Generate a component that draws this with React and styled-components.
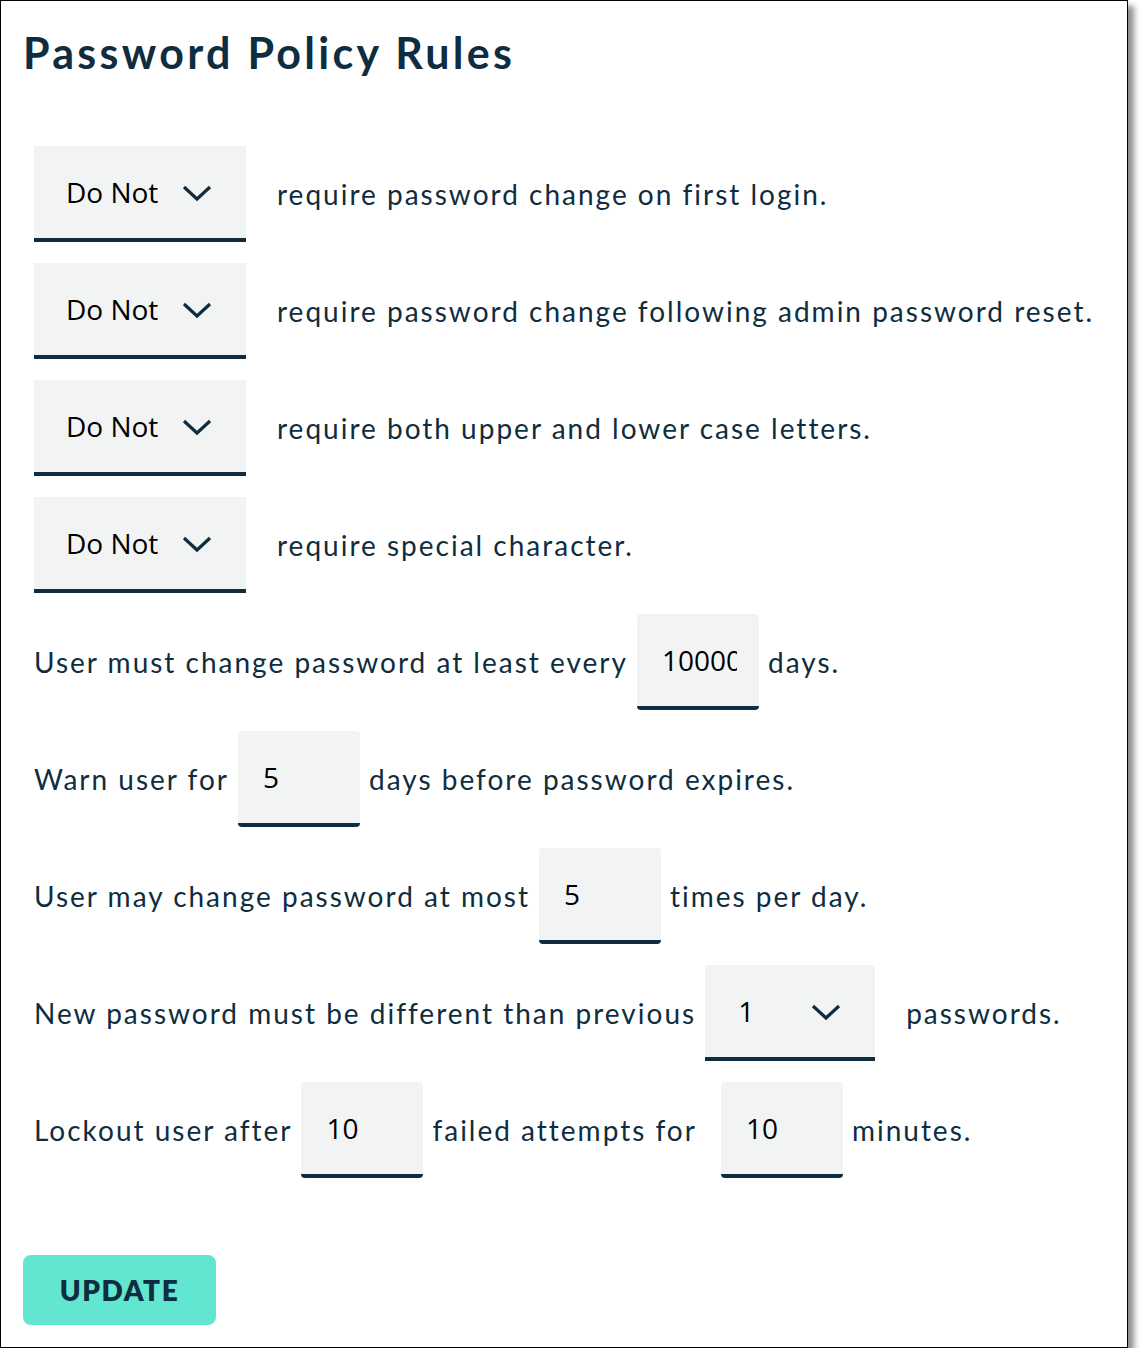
import React from 'react';
import styled, { createGlobalStyle } from 'styled-components';

const GlobalStyle = createGlobalStyle`
  body {
    margin: 0;
    background: #fff;
    font-family: 'Lato', 'Open Sans', sans-serif;
  }
`;

const Frame = styled.div`
  width: 1126px;
  height: 1346px;
  border: 1px solid #000;
  background: #fff;
  box-shadow: 6px 6px 6px rgba(0, 0, 0, 0.45);
  box-sizing: content-box;
`;

const Inner = styled.div`
  padding: 26px 22px 0 22px;
`;

const Title = styled.h1`
  margin: 0;
  font-family: 'Lato', sans-serif;
  font-weight: 700;
  font-size: 43px;
  color: #0f2d40;
  letter-spacing: 3.3px;
`;

const Form = styled.div`
  display: flex;
  flex-direction: column;
  gap: 21px;
  margin: 68px 0 0 11px;
`;

const Row = styled.div`
  display: flex;
  align-items: center;
  height: 96px;
  gap: ${(p) => p.gap || 9}px;
`;

const Text = styled.span`
  font-size: 28px;
  letter-spacing: 2px;
  color: #0f2d40;
  white-space: nowrap;
  margin-left: ${(p) => p.ml || 0}px;
`;

const SelectWrap = styled.div`
  position: relative;
  width: ${(p) => p.width}px;
  height: 96px;
  flex-shrink: 0;
`;

const Select = styled.select`
  appearance: none;
  width: 100%;
  height: 100%;
  border: none;
  border-bottom: 4px solid #0f2d40;
  background: #f2f3f3;
  padding: 0 0 0 ${(p) => p.pl || 32}px;
  font-family: 'Open Sans', sans-serif;
  font-size: 28px;
  color: #000;
  outline: none;
  box-sizing: border-box;
`;

const Chevron = styled.svg`
  position: absolute;
  right: 34px;
  top: 39px;
  width: 30px;
  height: 17px;
  pointer-events: none;
`;

const Input = styled.input`
  width: 122px;
  height: 96px;
  flex-shrink: 0;
  border: none;
  border-bottom: 4px solid #0f2d40;
  border-radius: 4px;
  background: #f2f3f3;
  padding: 0 22px 0 25px;
  margin-left: ${(p) => p.ml || 0}px;
  font-family: 'Open Sans', sans-serif;
  font-size: 28px;
  color: #000;
  outline: none;
  box-sizing: border-box;
`;

const Button = styled.button`
  margin-top: 77px;
  width: 193px;
  height: 70px;
  border: none;
  border-radius: 8px;
  background: #63e6cf;
  color: #0f2d40;
  font-family: 'Lato', sans-serif;
  font-weight: 800;
  font-size: 28px;
  letter-spacing: 1.5px;
  cursor: pointer;
`;

const Dropdown = ({ value, options, width, pl }) => (
  <SelectWrap width={width}>
    <Select defaultValue={value} pl={pl}>
      {options.map((o) => (
        <option key={o}>{o}</option>
      ))}
    </Select>
    <Chevron viewBox="0 0 30 17">
      <path d="M2 2 L15 14 L28 2" fill="none" stroke="#0f2d40" strokeWidth="3.2" />
    </Chevron>
  </SelectWrap>
);

const requirements = [
  'require password change on first login.',
  'require password change following admin password reset.',
  'require both upper and lower case letters.',
  'require special character.',
];

export default function App() {
  return (
    <>
      <GlobalStyle />
      <Frame>
        <Inner>
          <Title>Password Policy Rules</Title>
          <Form>
            {requirements.map((r) => (
              <Row key={r} gap={31}>
                <Dropdown value="Do Not" options={['Do Not', 'Do']} width={212} />
                <Text>{r}</Text>
              </Row>
            ))}
            <Row>
              <Text>User must change password at least every</Text>
              <Input defaultValue="10000" />
              <Text>days.</Text>
            </Row>
            <Row>
              <Text>Warn user for</Text>
              <Input defaultValue="5" />
              <Text>days before password expires.</Text>
            </Row>
            <Row>
              <Text>User may change password at most</Text>
              <Input defaultValue="5" />
              <Text>times per day.</Text>
            </Row>
            <Row>
              <Text>New password must be different than previous</Text>
              <Dropdown value="1" options={['1', '2', '3', '4', '5']} width={170} pl={33} />
              <Text ml={22}>passwords.</Text>
            </Row>
            <Row>
              <Text>Lockout user after</Text>
              <Input defaultValue="10" />
              <Text>failed attempts for</Text>
              <Input defaultValue="10" ml={15} />
              <Text>minutes.</Text>
            </Row>
          </Form>
          <Button>UPDATE</Button>
        </Inner>
      </Frame>
    </>
  );
}
